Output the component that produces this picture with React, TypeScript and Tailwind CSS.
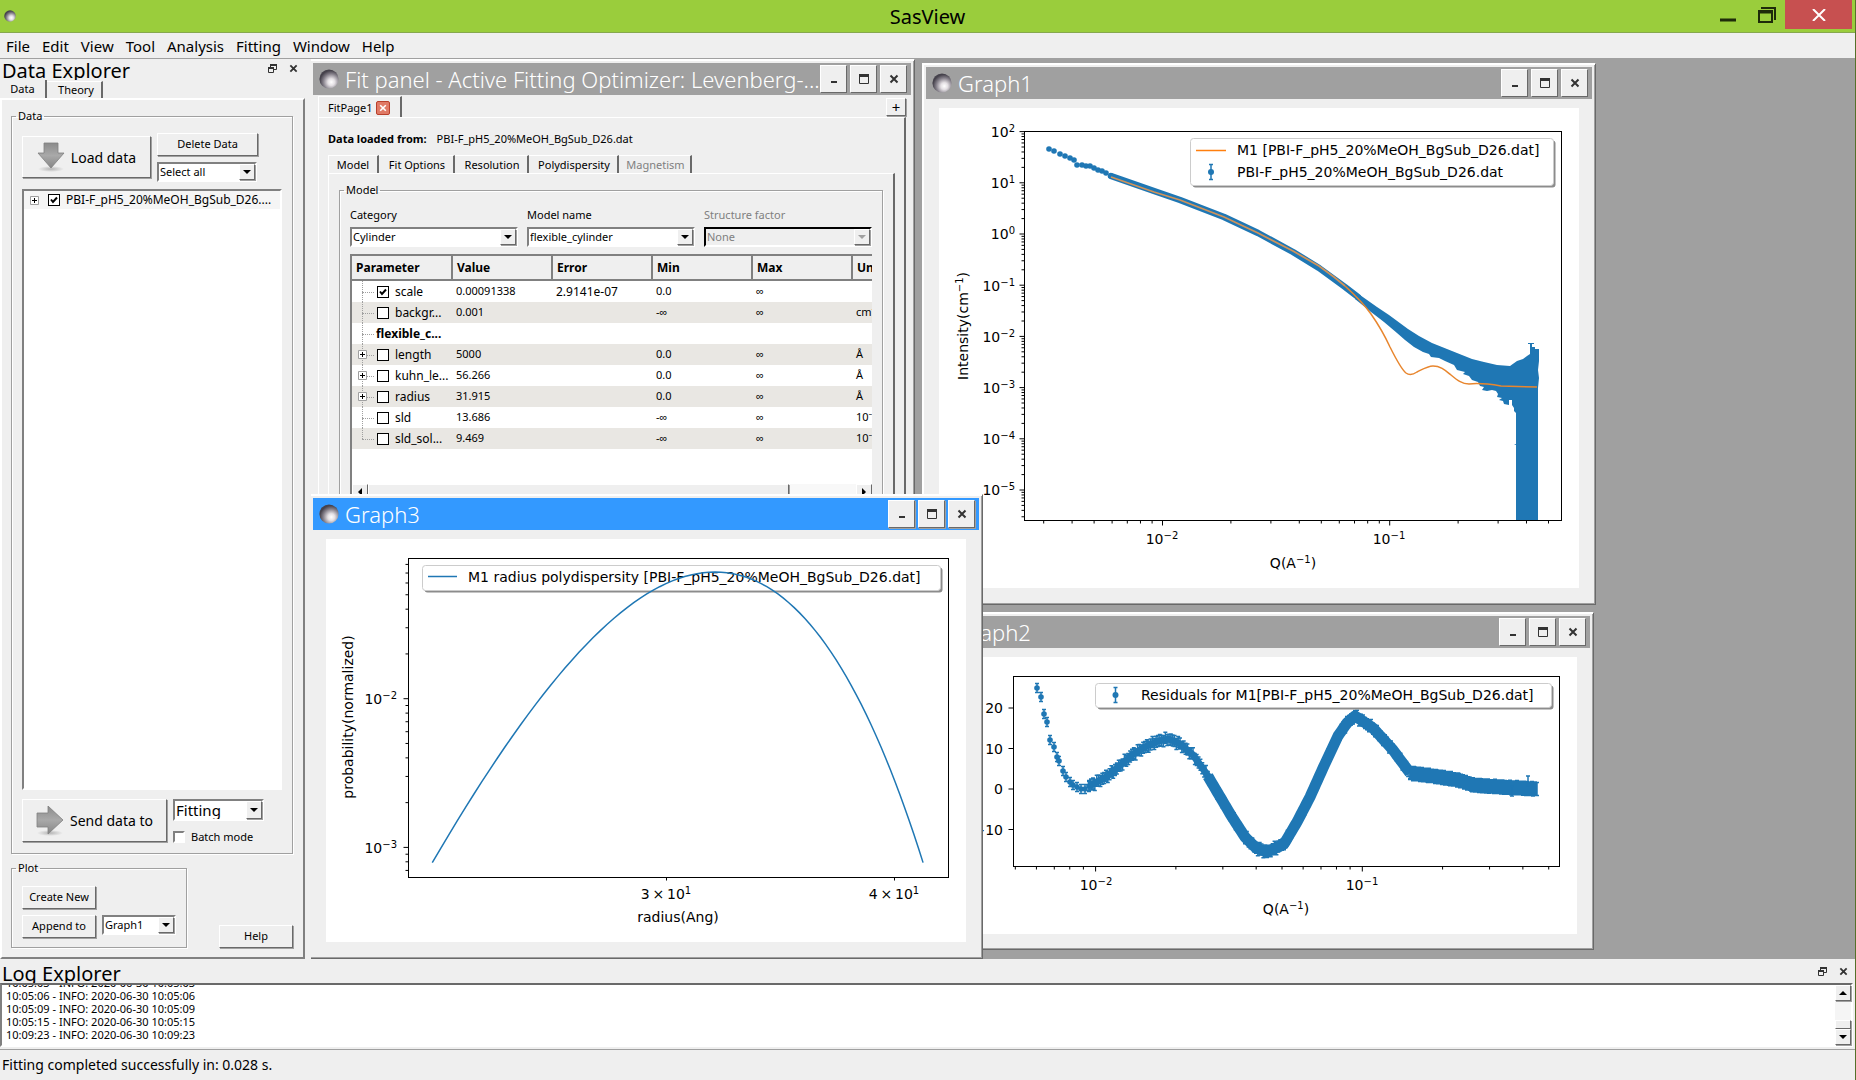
import React from 'react';
import clsx from 'clsx';

const BLUE = '#1f77b4';
const ORANGE = '#ff7f0e';

const raised = 'border border-t-white border-l-white border-r-[#696969] border-b-[#696969] shadow-[1px_1px_0_#a0a0a0] bg-[#efefef]';
const sunken = 'border-2 border-t-[#808080] border-l-[#808080] border-r-white border-b-white';

type Point = [number, number];

/* ---------- small widgets ---------- */

const Orb = ({ className }: { className: string }) => (
  <svg viewBox="0 0 20 20" className={className} aria-hidden="true">
    <defs>
      <radialGradient id="orb" cx="0.62" cy="0.66" r="0.6">
        <stop offset="0" stopColor="#ffffff" />
        <stop offset="0.3" stopColor="#e4e0e4" />
        <stop offset="0.7" stopColor="#85808a" />
        <stop offset="1" stopColor="#46424c" />
      </radialGradient>
    </defs>
    <circle cx="10" cy="10" r="9.6" fill="url(#orb)" />
  </svg>
);

const Cross = ({ className }: { className: string }) => (
  <svg viewBox="0 0 10 10" className={className} aria-hidden="true">
    <path d="M1.5 1.5 8.5 8.5M8.5 1.5 1.5 8.5" stroke="currentColor" strokeWidth="2" />
  </svg>
);

const Restore = () => (
  <svg viewBox="0 0 9 9" className="h-[9px] w-[9px]" aria-hidden="true">
    <path d="M2.5 3V.5h6v5H6" fill="none" stroke="#333" />
    <path d="M2 1h7" stroke="#333" strokeWidth="2" />
    <path d="M.5 3.5h5v5h-5z" fill="none" stroke="#333" />
    <path d="M0 4h6" stroke="#333" strokeWidth="2" />
  </svg>
);

const Arrow = ({ direction, className }: { direction: 'up' | 'down' | 'left' | 'right'; className?: string }) => {
  const paths = {
    up: 'M0 6 4 2 8 6z',
    down: 'M0 2h8L4 6z',
    left: 'M6 0v8L2 4z',
    right: 'M2 0v8l4-4z',
  };
  return (
    <svg viewBox="0 0 8 8" className={clsx('h-2 w-2', className)} aria-hidden="true">
      <path d={paths[direction]} fill="currentColor" />
    </svg>
  );
};

const Button = ({ className, children }: { className?: string; children: React.ReactNode }) => (
  <button className={clsx('flex items-center justify-center', raised, className)}>{children}</button>
);

type SelectProps = { id: string; label?: string; value: string; className?: string; disabled?: boolean };

const Select = ({ id, label, value, className, disabled }: SelectProps) => (
  <div
    className={clsx(
      'flex border-2 border-r-white border-b-white',
      disabled ? 'border-t-black border-l-black bg-[#efefef] text-[#808080]' : 'border-t-[#808080] border-l-[#808080] bg-white',
      className,
    )}
  >
    <select id={id} aria-label={label} disabled={disabled} className="min-w-0 flex-1 appearance-none bg-transparent pl-px outline-none">
      <option>{value}</option>
    </select>
    <span className={clsx('flex w-4 items-center justify-center', raised, disabled ? 'text-[#a0a0a0]' : 'text-black')}>
      <Arrow direction="down" />
    </span>
  </div>
);

const DockHeader = ({ title, className, iconClass }: { title: string; className: string; iconClass: string }) => (
  <div className={clsx('flex items-start justify-between overflow-hidden', className)}>
    <h2 className="pl-0.5 text-[20px]">{title}</h2>
    <div className={clsx('flex items-center gap-3 text-[#333]', iconClass)}>
      <button aria-label={`Float ${title}`} className="block"><Restore /></button>
      <button aria-label={`Close ${title}`} className="block"><Cross className="h-[9px] w-[9px]" /></button>
    </div>
  </div>
);

const GroupBox = ({ title, className, children }: { title: string; className?: string; children: React.ReactNode }) => (
  <fieldset className={clsx('min-w-0 border border-[#a0a0a0] shadow-[inset_1px_1px_0_#fff,1px_1px_0_#fff]', className)}>
    <legend className="-ml-1.5 px-0.5 leading-3">{title}</legend>
    {children}
  </fieldset>
);

const TreeExpander = () => (
  <svg viewBox="0 0 9 9" className="h-[9px] w-[9px] shrink-0" aria-hidden="true">
    <path d="M.5.5h8v8h-8z" fill="#fff" stroke="#a0a0a0" />
    <path d="M2 4.5h5M4.5 2v5" stroke="#000" />
  </svg>
);

const CheckBox = ({ label, checked }: { label: string; checked?: boolean }) => (
  <span className="relative flex h-3 w-3 shrink-0">
    <input type="checkbox" aria-label={label} defaultChecked={checked} className="peer h-3 w-3 appearance-none border border-black bg-white" />
    <svg viewBox="0 0 12 12" className="pointer-events-none absolute inset-0 hidden h-3 w-3 peer-checked:block" aria-hidden="true">
      <path d="M3 5.5 5 8l4-4.5" fill="none" stroke="#000" strokeWidth="2" />
    </svg>
  </span>
);

/* ---------- MDI windows ---------- */

type WindowProps = { title: string; active?: boolean; className: string; children: React.ReactNode };

const MdiWindow = ({ title, active, className, children }: WindowProps) => (
  <section className={clsx('absolute flex flex-col border border-t-white border-l-white border-r-[#696969] border-b-[#696969] bg-[#efefef] p-[3px] shadow-[inset_1px_1px_0_#fff,inset_-1px_-1px_0_#a0a0a0]', className)}>
    <header className={clsx('flex h-8 shrink-0 items-center pr-1', active ? 'bg-[#3399ff]' : 'bg-[#a0a0a0]')}>
      <Orb className="mx-1.5 h-5 w-5 shrink-0" />
      <h3 className="min-w-0 flex-1 truncate text-[22px] leading-8 font-light text-white">{title}</h3>
      <div className="flex gap-[3px] text-[#333]">
        <Button className="h-7 w-[27px]">
          <svg viewBox="0 0 10 10" className="h-[10px] w-[10px]" aria-label="Minimize"><path d="M2 8h6" stroke="currentColor" strokeWidth="2" /></svg>
        </Button>
        <Button className="h-7 w-[27px]">
          <svg viewBox="0 0 10 10" className="h-[10px] w-[10px]" aria-label="Maximize"><path d="M.5.5h9v9h-9z" fill="none" stroke="currentColor" /><path d="M0 1.5h10" stroke="currentColor" strokeWidth="3" /></svg>
        </Button>
        <Button className="h-7 w-[27px]"><Cross className="h-[10px] w-[10px]" /></Button>
      </div>
    </header>
    {children}
  </section>
);

/* ---------- plots ---------- */

const Power = ({ x, y, base = '10', exp, anchor }: { x: number; y: number; base?: string; exp: string; anchor: 'middle' | 'end' }) => (
  <text x={x} y={y} textAnchor={anchor}>
    {base}
    <tspan dy="-5" fontSize="10">{exp}</tspan>
  </text>
);

const AxisLabel = ({ x, y, vertical, text, exp, tail }: { x: number; y: number; vertical?: boolean; text: string; exp?: string; tail?: string }) => (
  <text x={x} y={y} textAnchor="middle" transform={vertical ? `rotate(-90 ${x} ${y})` : undefined}>
    {text}
    {exp && <tspan dy="-5" fontSize="10">{exp}</tspan>}
    {tail && <tspan dy="5">{tail}</tspan>}
  </text>
);

type Tick = { at: number; major: boolean };

// every 1..9 step of a log axis that falls between from and to;
// decade is negative for an axis that grows upwards
const logTicks = (origin: number, decade: number, from: number, to: number) => {
  const out: Tick[] = [];
  for (let d = -8; d <= 8; d++) {
    for (let m = 1; m < 10; m++) {
      const at = origin + decade * (d + Math.log10(m));
      if (at >= from && at <= to) out.push({ at, major: m === 1 });
    }
  }
  return out;
};

const XTicks = ({ y, ticks }: { y: number; ticks: Tick[] }) => (
  <path d={ticks.map((t) => `M${t.at} ${y}v${t.major ? 5 : 3}`).join('')} stroke="#000" />
);

const YTicks = ({ x, ticks }: { x: number; ticks: Tick[] }) => (
  <path d={ticks.map((t) => `M${x} ${t.at}h${t.major ? -5 : -3}`).join('')} stroke="#000" />
);

const LegendBox = ({ x, y, width, height }: { x: number; y: number; width: number; height: number }) => (
  <g>
    <rect x={x + 2} y={y + 2} width={width} height={height} rx="3" fill="#8c8c8c" />
    <rect x={x} y={y} width={width} height={height} rx="3" fill="#fff" stroke="#ccc" />
  </g>
);

const errorBar = (x: number, y: number, e: number) =>
  `M${x} ${y - e}V${y + e}M${x - 2} ${y - e}h4M${x - 2} ${y + e}h4`;

const line = (points: Point[]) => points.map(([x, y], i) => `${i ? 'L' : 'M'}${x} ${y}`).join('');

const resample = (points: Point[], step: number): Point[] => {
  const out: Point[] = [];
  for (let i = 0; i < points.length - 1; i++) {
    const [x0, y0] = points[i];
    const [x1, y1] = points[i + 1];
    const n = Math.max(1, Math.round((x1 - x0) / step));
    for (let k = 0; k < n; k++) out.push([x0 + ((x1 - x0) * k) / n, y0 + ((y1 - y0) * k) / n]);
  }
  out.push(points[points.length - 1]);
  return out;
};

const jitter = (i: number) => Math.sin(i * 12.9898) * Math.cos(i * 4.1414);

const Figure = ({ width, height, label, children }: { width: number; height: number; label: string; children: React.ReactNode }) => (
  <svg role="img" aria-label={label} width={width} height={height} className="mx-[13px] mt-[9px] block bg-white font-['DejaVu_Sans',sans-serif] text-[14px]">
    {children}
  </svg>
);

const intensityDots: Point[] = [
  [110, 41], [115, 43], [121, 46], [126, 48], [131, 50], [135, 52], [138, 57], [143, 57], [147, 58],
  [151, 58], [155, 60], [159, 62], [163, 63], [167, 65], [172, 68],
];

// outline of the error bars where they grow into one solid area
const intensityUpper: Point[] = [
  [421, 187], [438, 199], [450, 207], [469, 221], [480, 228], [493, 235], [508, 241], [523, 247], [533, 251],
  [545, 254], [558, 257], [571, 258], [578, 253], [584, 251], [588, 248], [591, 246], [591, 236], [589, 236],
  [589, 235], [595, 235], [595, 236], [593, 236], [593, 239], [596, 239], [596, 241], [600, 241], [600, 253],
  [599, 262], [600, 270], [599, 280], [599, 412],
];

const intensityLower: Point[] = [
  [577, 412], [577, 337], [575, 337], [577, 336], [577, 305], [575, 303], [575, 300], [573, 297], [573, 292],
  [570, 292], [570, 297], [565, 296], [564, 293], [560, 292], [563, 290], [558, 289], [559, 286], [557, 283],
  [553, 282], [548, 283], [543, 282], [545, 279], [541, 278], [539, 274], [533, 272], [530, 268], [524, 266],
  [526, 264], [518, 262], [515, 257], [506, 253], [500, 250], [492, 249], [490, 246], [484, 244], [475, 239],
  [466, 232], [458, 225], [445, 214], [432, 204], [416, 191],
];

const IntensityPlot = () => (
  <Figure width={640} height={480} label="Intensity against Q">
    <YTicks x={85.5} ticks={logTicks(126, -51.2, 23, 412)} />
    <XTicks y={412.5} ticks={logTicks(223.5, 227.2, 86, 622)} />
    {['2', '1', '0', '−1', '−2', '−3', '−4', '−5'].map((exp, i) => (
      <Power key={exp} x={76} y={29 + i * 51.2} exp={exp} anchor="end" />
    ))}
    <Power x={223} y={436} exp="−2" anchor="middle" />
    <Power x={450} y={436} exp="−1" anchor="middle" />
    <AxisLabel x={29} y={218} vertical text="Intensity(cm" exp="−1" tail=")" />
    <AxisLabel x={354} y={460} text="Q(A" exp="−1" tail=")" />
    {intensityDots.map(([x, y]) => <circle key={x} cx={x} cy={y} r="2.8" fill={BLUE} />)}
    <path
      d="M172 68 215 83 241 92 285 109 319 125 354 144 380 160 406 179 419 189"
      fill="none" stroke={BLUE} strokeWidth="6.5" strokeLinejoin="round" strokeLinecap="round"
    />
    <path d={`${line([...intensityUpper, ...intensityLower])}z`} fill={BLUE} />
    <path d="M172 69 215 84 241 92 285 109 319 125 354 143 380 158 395 169 406 178" fill="none" stroke="#d0935a" strokeWidth="1.8" />
    <path
      d="M406 178C417 188 425 196 432 206S445 226 451 239C456 249 462 261 467 265 471 268 475 266 478 264 484 261 489 258 494 258 502 258 507 263 512 267 518 272 523 276 530 276 538 275 550 276 562 278L598 279"
      fill="none" stroke="#e8862e" strokeWidth="1.5"
    />
    <rect x="85.5" y="23.5" width="537" height="389" fill="none" stroke="#000" />
    <LegendBox x={251.5} y={30.5} width={363} height={47} />
    <path d="M257 42.5h30" stroke={ORANGE} strokeWidth="1.5" />
    <path d={errorBar(272, 64, 7.5)} stroke={BLUE} strokeWidth="1.5" />
    <circle cx="272" cy="64" r="3" fill={BLUE} />
    <text x="298" y="47">M1 [PBI-F_pH5_20%MeOH_BgSub_D26.dat]</text>
    <text x="298" y="69">PBI-F_pH5_20%MeOH_BgSub_D26.dat</text>
  </Figure>
);

const residualHead: Point[] = [
  [100, 31], [104, 40], [107, 57], [110, 65], [113, 83], [117, 90], [120, 100], [122, 104], [126, 114],
  [129, 120], [133, 125], [136, 128], [140, 130], [144, 132], [148, 132], [152, 129],
];

const residualBody: Point[] = [
  [152, 129], [156, 127], [169, 120], [178, 113], [195, 98], [208, 90], [221, 84], [232, 82], [243, 87],
  [256, 98], [269, 116], [282, 138], [295, 160], [308, 180], [319, 191], [330, 195], [347, 187], [360, 165],
  [373, 140], [386, 111], [401, 79], [410, 66], [418, 59], [436, 71], [456, 93], [473, 116],
];

const residualTail: Point[] = [[473, 116], [503, 120], [521, 123], [536, 128], [564, 130], [600, 132]];

const ResidualPlot = () => {
  const body = resample(residualBody, 2);
  const tail = resample(residualTail, 1);
  return (
    <Figure width={640} height={277} label="Residuals">
      <YTicks x={76.5} ticks={[51, 91.5, 132, 172.5].map((at) => ({ at, major: true }))} />
      <XTicks y={209.5} ticks={logTicks(158.6, 266.7, 77, 622)} />
      <text x="66" y="56" textAnchor="end">20</text>
      <text x="66" y="97" textAnchor="end">10</text>
      <text x="66" y="137" textAnchor="end">0</text>
      <text x="66" y="178" textAnchor="end">−10</text>
      <Power x={159} y={233} exp="−2" anchor="middle" />
      <Power x={425} y={233} exp="−1" anchor="middle" />
      <AxisLabel x={349} y={257} text="Q(A" exp="−1" tail=")" />
      <path d={residualHead.map(([x, y]) => errorBar(x, y, 4.5)).join('')} stroke={BLUE} strokeWidth="1.5" />
      {residualHead.map(([x, y]) => <circle key={x} cx={x} cy={y} r="2.8" fill={BLUE} />)}
      <path d={body.map(([x, y], i) => errorBar(x, y + jitter(i) * 2, 5.5)).join('')} stroke={BLUE} strokeWidth="1.5" />
      <path d={line(body)} fill="none" stroke={BLUE} strokeWidth="7" />
      <path d={line(body.filter(([x]) => x > 270))} fill="none" stroke={BLUE} strokeWidth="11" strokeLinejoin="round" />
      <path d={tail.map(([x, y], i) => errorBar(x, y + jitter(i) * 0.8, 6.5)).join('')} stroke={BLUE} strokeWidth="1.5" />
      <path d={errorBar(591, 124, 5) + errorBar(575, 134, 5)} stroke={BLUE} strokeWidth="1.5" />
      <rect x="76.5" y="19.5" width="546" height="190" fill="none" stroke="#000" />
      <LegendBox x={158.5} y={26.5} width={456} height={24} />
      <path d={errorBar(178.5, 38, 7.5)} stroke={BLUE} strokeWidth="1.5" />
      <circle cx="178.5" cy="38" r="3" fill={BLUE} />
      <text x="204" y="43">Residuals for M1[PBI-F_pH5_20%MeOH_BgSub_D26.dat]</text>
    </Figure>
  );
};

const PolydispersityPlot = () => {
  const mean = 31.915;
  const sigma = 3.1915;
  const curve = Array.from({ length: 81 }, (_, i): Point => {
    const z = -3 + (6 * i) / 80;
    return [
      340 + 1825.6 * Math.log10((mean + z * sigma) / 30),
      33 + 148.7 * ((z * z) / 2) * Math.LOG10E,
    ];
  });

  return (
    <Figure width={640} height={403} label="Radius polydispersity">
      <YTicks x={82.5} ticks={logTicks(159.7, -148.7, 20, 338)} />
      <XTicks y={338.5} ticks={[{ at: 340.5, major: false }, { at: 568.5, major: false }]} />
      <Power x={71} y={165} exp="−2" anchor="end" />
      <Power x={71} y={314} exp="−3" anchor="end" />
      <Power x={340} y={360} base={'3\u2009×\u200910'} exp="1" anchor="middle" />
      <Power x={568} y={360} base={'4\u2009×\u200910'} exp="1" anchor="middle" />
      <AxisLabel x={27} y={178} vertical text="probability(normalized)" />
      <AxisLabel x={352} y={383} text="radius(Ang)" />
      <rect x="82.5" y="19.5" width="540" height="319" fill="none" stroke="#000" />
      <LegendBox x={96.5} y={26.5} width={518} height={25} />
      <path d="M102 37.5h29" stroke={BLUE} strokeWidth="1.5" />
      <text x="142" y="43">M1 radius polydispersity [PBI-F_pH5_20%MeOH_BgSub_D26.dat]</text>
      <path d={line(curve)} fill="none" stroke={BLUE} strokeWidth="1.5" />
    </Figure>
  );
};

/* ---------- fit panel ---------- */

const rows = [
  { name: 'scale', value: '0.00091338', error: '2.9141e-07', min: '0.0', unit: '', checked: true },
  { name: 'backgr...', value: '0.001', min: '-∞', unit: 'cm⁻¹' },
  { name: 'flexible_c...', header: true },
  { name: 'length', value: '5000', min: '0.0', unit: 'Å', expand: true },
  { name: 'kuhn_le...', value: '56.266', min: '0.0', unit: 'Å', expand: true },
  { name: 'radius', value: '31.915', min: '0.0', unit: 'Å', expand: true },
  { name: 'sld', value: '13.686', min: '-∞', unit: '10⁻⁶' },
  { name: 'sld_sol...', value: '9.469', min: '-∞', unit: '10⁻⁶' },
];

const ParameterTable = () => (
  <div className="mt-[7px] flex h-[246px] flex-col overflow-hidden border-t-2 border-l-2 border-[#808080] bg-white">
    <table className="w-[600px] table-fixed border-collapse text-left whitespace-nowrap">
      <thead>
        <tr className="h-6 bg-[#efefef] text-[12px]">
          {['Parameter', 'Value', 'Error', 'Min', 'Max', 'Units'].map((head) => (
            <th key={head} className="w-[100px] border-r-2 border-b-2 border-[#808080] p-0 pl-1 font-bold">{head}</th>
          ))}
        </tr>
      </thead>
      <tbody>
        {rows.map((row, i) => (
          <tr key={row.name} className={clsx('h-[21px]', i % 2 ? 'bg-[#e9e7e3]' : 'bg-white')}>
            <td className="p-0">
              <div className="flex h-[21px] items-center">
                <span className="relative ml-[6px] flex h-full w-[19px] shrink-0 items-center">
                  <span className={clsx('absolute top-0 left-1 border-l border-dotted border-[#a0a0a0]', i === rows.length - 1 ? 'h-1/2' : 'h-full')} />
                  <span className="absolute top-1/2 left-1 w-3 border-t border-dotted border-[#a0a0a0]" />
                  {row.expand && <span className="relative"><TreeExpander /></span>}
                </span>
                {row.header ? (
                  <span className="-ml-px text-[12px] font-bold">{row.name}</span>
                ) : (
                  <>
                    <CheckBox label={row.name} checked={row.checked} />
                    <span className="ml-1.5 text-[12px]">{row.name}</span>
                  </>
                )}
              </div>
            </td>
            <td className="p-0 pl-1">{row.value}</td>
            <td className="p-0 pl-1 text-[12px]">{row.error}</td>
            <td className="p-0 pl-1">{row.min}</td>
            <td className="p-0 pl-1">{row.header ? '' : '∞'}</td>
            <td className="p-0 pl-1">{row.unit}</td>
          </tr>
        ))}
      </tbody>
    </table>
    <div className="mt-auto flex h-4 bg-[#f8f8f8]">
      <Button className="w-4"><Arrow direction="left" /></Button>
      <div className={clsx('w-[421px]', raised)} />
      <Button className="ml-auto w-4"><Arrow direction="right" /></Button>
    </div>
  </div>
);

const tabs = [
  { name: 'Model', width: 'w-[51px]' },
  { name: 'Fit Options', width: 'w-[76px]' },
  { name: 'Resolution', width: 'w-[74px]' },
  { name: 'Polydispersity', width: 'w-[90px]' },
  { name: 'Magnetism', width: 'w-[73px]', disabled: true },
];

const FitPanel = () => (
  <div className="flex flex-1 flex-col pr-[5px] pl-[5px] pt-px">
    <div className="flex h-[21px] justify-between">
      <div className="flex h-[21px] items-center border-t border-l border-white border-r-2 border-r-[#696969] pt-0.5 pr-[10px] pl-[9px]">
        <span>FitPage1</span>
        <button aria-label="Close FitPage1" className="ml-[3px] flex h-[14px] w-[14px] items-center justify-center rounded-[2px] border border-[#b9402c] bg-[#e07a66] text-white">
          <Cross className="h-2 w-2" />
        </button>
      </div>
      <Button className="mt-0.5 h-[18px] w-5 text-[15px] leading-none">+</Button>
    </div>
    <div className="flex flex-1 flex-col border border-t-white border-l-white border-r-2 border-r-[#696969] pr-[9px] pl-[9px]">
      <p className="mt-[13px] h-4 leading-4">
        <b>Data loaded from:</b>
        <span className="ml-2.5">PBI-F_pH5_20%MeOH_BgSub_D26.dat</span>
      </p>
      <div role="tablist" className="mt-2 flex h-[18px]">
        {tabs.map((tab, i) => (
          <button
            key={tab.name}
            role="tab"
            disabled={tab.disabled}
            className={clsx(
              'border-t border-t-white border-r-2 border-r-[#696969] leading-4',
              tab.width,
              i === 0 ? 'border-l border-l-white' : 'pt-px pl-0.5',
              tab.disabled && 'text-[#808080]',
            )}
          >
            {tab.name}
          </button>
        ))}
      </div>
      <div className="flex-1 border border-t-white border-l-white border-r-2 border-r-[#696969] px-[10px] pt-[10px]">
        <GroupBox title="Model" className="h-[400px] px-[10px]">
          <div className="mt-[11px] grid grid-cols-[168px_168px_1fr] gap-x-[9px] gap-y-1">
            <label htmlFor="category" className="leading-4">Category</label>
            <label htmlFor="model" className="leading-4">Model name</label>
            <label htmlFor="structure" className="leading-4 text-[#808080]">Structure factor</label>
            <Select id="category" value="Cylinder" className="h-5" />
            <Select id="model" value="flexible_cylinder" className="h-5" />
            <Select id="structure" value="None" disabled className="h-5" />
          </div>
          <ParameterTable />
        </GroupBox>
      </div>
    </div>
  </div>
);

/* ---------- docks ---------- */

const BigArrow = ({ right }: { right?: boolean }) => (
  <svg viewBox="0 0 28 30" className="h-[30px] w-7 shrink-0" aria-hidden="true">
    <defs>
      <linearGradient id="steel" x1="0" y1="0" x2="0" y2="1">
        <stop offset="0" stopColor="#8b8b8b" />
        <stop offset="0.5" stopColor="#a9a9a9" />
        <stop offset="1" stopColor="#858585" />
      </linearGradient>
      <radialGradient id="steel-shadow">
        <stop offset="0" stopColor="#b4b4b4" />
        <stop offset="1" stopColor="#efefef" />
      </radialGradient>
    </defs>
    <ellipse cx="14" cy="27" rx="13" ry="3" fill="url(#steel-shadow)" />
    <path
      d={right ? 'M1 7h11V0l15 14-15 14v-7H1z' : 'M7 1h14v10h6L14 26 1 11h6z'}
      fill="url(#steel)" stroke="#808080" strokeWidth="0.8"
    />
  </svg>
);

const DataExplorer = () => (
  <aside className="flex w-[305px] shrink-0 flex-col">
    <DockHeader title="Data Explorer" className="h-[21px] leading-6" iconClass="pt-[5px] pr-[7px]" />
    <div role="tablist" className="flex h-[18px] items-end">
      <button role="tab" className="h-[18px] w-[47px] border-r-2 border-[#696969] text-center leading-4">Data</button>
      <button role="tab" className="h-[17px] w-14 border-t border-r-2 border-t-white border-r-[#696969] pl-1 leading-4">Theory</button>
    </div>
    <div className="flex flex-1 flex-col border-2 border-t-white border-l-white border-r-[#808080] border-b-[#808080] pt-[10px] pr-[10px] pb-[9px] pl-[9px]">
      <GroupBox title="Data" className="flex flex-1 flex-col px-[10px] pb-2">
        <div className="mt-[11px] flex gap-1.5">
          <Button className="mt-[3px] h-[42px] w-[129px] gap-1.5 text-[14px]"><BigArrow /> Load data</Button>
          <div>
            <Button className="h-[23px] w-[101px]">Delete Data</Button>
            <Select id="select-all" label="Selection" value="Select all" className="mt-1.5 h-5 w-[100px]" />
          </div>
        </div>
        <ul className={clsx('mt-[7px] flex-1 bg-white', sunken)}>
          <li className="flex h-[18px] items-center gap-[9px] bg-[#f5f5f5] pl-1.5 whitespace-nowrap">
            <TreeExpander />
            <span className="flex items-center gap-1.5">
              <CheckBox label="PBI-F_pH5_20%MeOH_BgSub_D26.dat" checked />
              <span className="text-[12px]">PBI-F_pH5_20%MeOH_BgSub_D26....</span>
            </span>
          </li>
        </ul>
        <div className="mt-[9px] flex gap-1.5">
          <Button className="h-[43px] w-[145px] gap-1.5 text-[14px]"><BigArrow right /> Send data to</Button>
          <div>
            <Select id="send-target" label="Send target" value="Fitting" className="h-[22px] w-[91px] text-[15px] leading-[18px]" />
            <label className="mt-2 flex items-center gap-1.5 leading-4">
              <input type="checkbox" className={clsx('h-3 w-3 appearance-none bg-white', sunken)} />
              Batch mode
            </label>
          </div>
        </div>
      </GroupBox>
      <div className="mt-2 flex items-end justify-between">
        <GroupBox title="Plot" className="h-[86px] w-[176px] px-[10px]">
          <Button className="mt-3 h-[23px] w-[74px]">Create New</Button>
          <div className="mt-1.5 flex gap-1.5">
            <Button className="h-[23px] w-[74px]">Append to</Button>
            <Select id="append-target" label="Append target" value="Graph1" className="h-5 w-[74px]" />
          </div>
        </GroupBox>
        <Button className="h-[23px] w-[74px]">Help</Button>
      </div>
    </div>
  </aside>
);

const logTimes = ['10:05:03', '10:05:06', '10:05:09', '10:05:15', '10:09:23'];

const LogExplorer = () => (
  <section className="shrink-0">
    <DockHeader title="Log Explorer" className="h-6 leading-[30px]" iconClass="pt-2 pr-[7px]" />
    <div className="mr-0.5 flex h-16 border-2 border-t-[#696969] border-l-[#808080] border-r-white border-b-white bg-white">
      <div className="flex flex-1 flex-col justify-end overflow-hidden pb-1 pl-1 text-[11px] leading-[13px]">
        {logTimes.map((time) => (
          <p key={time} className="shrink-0">{time} - INFO: 2020-06-30 {time}</p>
        ))}
      </div>
      <div className="flex w-4 flex-col bg-[#f5f5f5]">
        <Button className="h-4"><Arrow direction="up" /></Button>
        <div className={clsx('mt-auto h-[9px]', raised)} />
        <Button className="h-4"><Arrow direction="down" /></Button>
      </div>
    </div>
  </section>
);

const menu = ['File', 'Edit', 'View', 'Tool', 'Analysis', 'Fitting', 'Window', 'Help'];

export default function App() {
  return (
    <div className="flex h-screen flex-col overflow-hidden border-r border-[#55702a] bg-[#efefef] font-['Noto_Sans',sans-serif] text-[11px] text-black">
      <header className="flex h-[33px] shrink-0 items-start border-b border-[#86a84e] bg-[#9acd3c]">
        <Orb className="mt-2.5 ml-1 h-3 w-3" />
        <h1 className="flex-1 pl-[132px] text-center text-[20px] leading-[34px]">SasView</h1>
        <div className="flex items-center text-[#1e2b0a]">
          <button aria-label="Minimize" className="flex h-[29px] w-[42px] items-center justify-center">
            <svg viewBox="0 0 16 18" className="h-[18px] w-4"><path d="M0 14h16" stroke="currentColor" strokeWidth="3" /></svg>
          </button>
          <button aria-label="Restore" className="flex h-[29px] w-[36px] items-center justify-center">
            <svg viewBox="0 0 18 16" className="h-4 w-[18px]">
              <path d="M3 1h14v12M1 15V4h13v11z" fill="none" stroke="currentColor" strokeWidth="2" />
              <path d="M1 5h13" stroke="currentColor" strokeWidth="3" />
            </svg>
          </button>
          <button aria-label="Close" className="mr-[3px] flex h-[29px] w-[67px] items-center justify-center bg-[#c75050] text-white">
            <svg viewBox="0 0 14 12" className="h-3 w-3.5"><path d="M1 0 13 12M13 0 1 12" stroke="currentColor" strokeWidth="2" /></svg>
          </button>
        </div>
      </header>

      <nav className="flex h-[26px] shrink-0 items-center gap-3 border-b border-[#a0a0a0] pl-1.5 text-[15px] leading-6">
        {menu.map((item) => (
          <button key={item}>{item}</button>
        ))}
      </nav>

      <main className="flex min-h-0 flex-1">
        <DataExplorer />
        <div className="relative ml-[6px] flex-1 overflow-hidden bg-[#a0a0a0]">
          <MdiWindow title="Fit panel - Active Fitting Optimizer: Levenberg-..." className="top-0 -left-0.5 h-[600px] w-[606px]">
            <FitPanel />
          </MdiWindow>
          <MdiWindow title="Graph1" className="top-1 left-[611px] h-[542px] w-[674px]">
            <IntensityPlot />
          </MdiWindow>
          <MdiWindow title="Graph2" className="top-[553px] left-[609px] h-[338px] w-[674px]">
            <ResidualPlot />
          </MdiWindow>
          <MdiWindow title="Graph3" active className="top-[435px] -left-0.5 h-[465px] w-[674px]">
            <PolydispersityPlot />
          </MdiWindow>
        </div>
      </main>

      <LogExplorer />
      <footer className="mt-0.5 h-[31px] shrink-0 border-t border-[#a0a0a0] pl-0.5 text-[14px] leading-[30px]">
        Fitting completed successfully in: 0.028 s.
      </footer>
    </div>
  );
}
